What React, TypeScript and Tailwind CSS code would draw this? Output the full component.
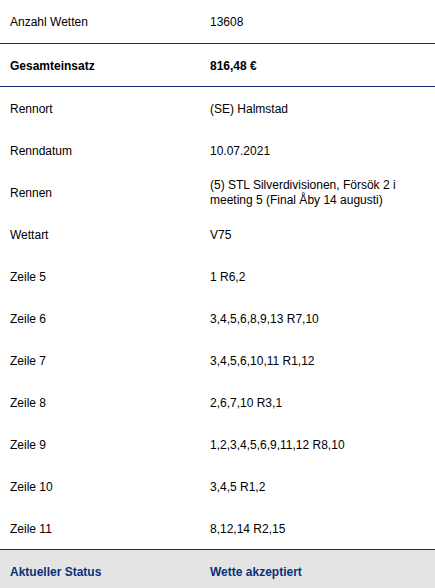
import React from "react";

type Row = { label: string; value: React.ReactNode; bold?: boolean; border?: boolean; h?: string };

const rows: Row[] = [
  { label: "Anzahl Wetten", value: "13608", border: true, h: "h-[44px]" },
  { label: "Gesamteinsatz", value: "816,48 €", bold: true, border: true, h: "h-[43px]" },
  { label: "Rennort", value: "(SE) Halmstad" },
  { label: "Renndatum", value: "10.07.2021" },
  { label: "Rennen", value: "(5) STL Silverdivisionen, Försök 2 i meeting 5 (Final Åby 14 augusti)" },
  { label: "Wettart", value: "V75" },
  { label: "Zeile 5", value: "1 R6,2" },
  { label: "Zeile 6", value: "3,4,5,6,8,9,13 R7,10" },
  { label: "Zeile 7", value: "3,4,5,6,10,11 R1,12" },
  { label: "Zeile 8", value: "2,6,7,10 R3,1" },
  { label: "Zeile 9", value: "1,2,3,4,5,6,9,11,12 R8,10" },
  { label: "Zeile 10", value: "3,4,5 R1,2" },
  { label: "Zeile 11", value: "8,12,14 R2,15", border: true, h: "h-[43px]" },
];

export default function App() {
  return (
    <div
      className="w-[435px] h-[588px] overflow-hidden bg-white text-[12px] leading-[15px] text-black"
      style={{ fontFamily: '"Liberation Sans", Arial, sans-serif' }}
    >
      {rows.map((r, i) => (
        <div
          key={i}
          className={`grid grid-cols-[200px_1fr] items-center pt-[2px] ${r.h ?? "h-[42px]"} ${
            r.border ? "border-b border-[#0b2e6f]" : ""
          } ${r.bold ? "font-bold" : ""}`}
        >
          <div className="pl-[10px]">{r.label}</div>
          <div className="pl-[10px] pr-[14px]">{r.value}</div>
        </div>
      ))}
      <div className="grid grid-cols-[200px_1fr] items-center pt-[2px] h-[42px] bg-[#e4e4e4] font-bold text-[#0a3178]">
        <div className="pl-[10px]">Aktueller Status</div>
        <div className="pl-[10px]">Wette akzeptiert</div>
      </div>
    </div>
  );
}
